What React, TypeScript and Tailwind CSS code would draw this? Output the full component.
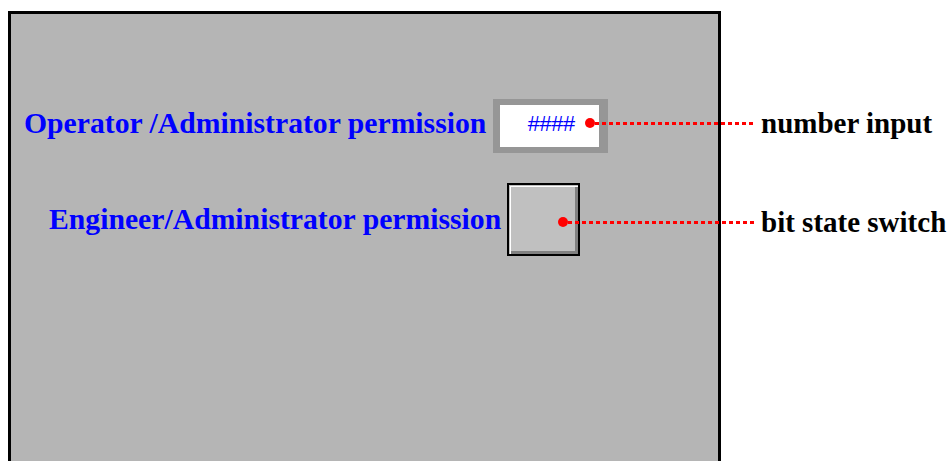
import React from "react";

function Dashed({ width }: { width: number }) {
  return (
    <svg width={width} height={3} className="block">
      <line x1={0} y1={1.5} x2={width} y2={1.5} stroke="#ff0000" strokeWidth={3} strokeDasharray="4 3" />
    </svg>
  );
}

export default function App() {
  return (
    <div className="relative w-[950px] h-[461px] overflow-hidden bg-white font-['Liberation_Serif',serif]">
      <div className="ml-[8px] mt-[11px] w-[713px] h-[470px] bg-[#b5b5b5] border-[3px] border-b-0 border-black flex flex-col">
        <div className="mt-[85px] pl-[13px] flex items-center">
          <span className="mb-[4px] text-[29.7px] leading-none font-bold text-[#0000ff] whitespace-nowrap">
            Operator /Administrator permission
          </span>
          <div className="ml-[7px] bg-[#969696] pl-[7px] pr-[9px] pt-[6px] pb-[6px]">
            <div className="w-[99px] h-[42px] bg-white flex items-center justify-end pr-[25px]">
              <span className="font-['Liberation_Mono',monospace] text-[22px] tracking-[-1.4px] leading-none text-[#0000ff]">####</span>
            </div>
          </div>
        </div>
        <div className="mt-[30px] pl-[38px] flex items-center">
          <span className="text-[29.7px] leading-none font-bold text-[#0000ff] whitespace-nowrap">
            Engineer/Administrator permission
          </span>
          <div className="ml-[6px] w-[73px] h-[73px] border-2 border-black bg-[#c0c0c0] shadow-[inset_1px_1px_0_#c0c0c0,inset_2px_2px_0_#ffffff,inset_-3px_-3px_0_#808080]" />
        </div>
      </div>

      {/* annotation 1 */}
      <div className="absolute left-[585px] top-[118px] w-[10px] h-[10px] rounded-full bg-[#ff0000]" />
      <div className="absolute left-[595px] top-[108px] h-[30px] flex items-center">
        <Dashed width={160} />
        <span className="ml-[6px] text-[29px] leading-none font-bold text-black whitespace-nowrap">number input</span>
      </div>

      {/* annotation 2 */}
      <div className="absolute left-[558px] top-[217px] w-[10px] h-[10px] rounded-full bg-[#ff0000]" />
      <div className="absolute left-[568px] top-[207px] h-[30px] flex items-center">
        <Dashed width={186} />
        <span className="ml-[7px] text-[29px] leading-none font-bold text-black whitespace-nowrap">bit state switch</span>
      </div>
    </div>
  );
}
